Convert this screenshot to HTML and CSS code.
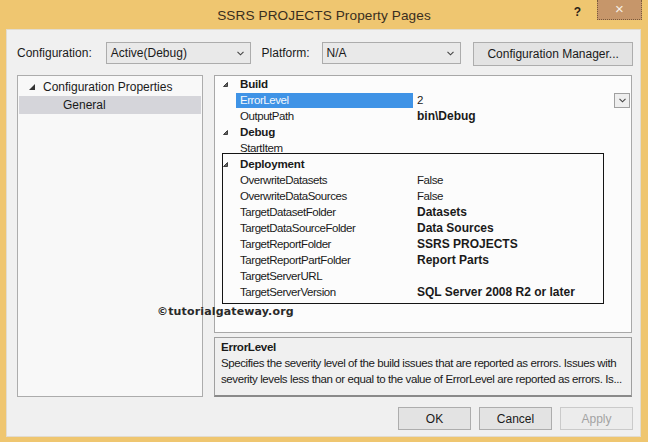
FILE: index.html
```html
<!DOCTYPE html>
<html>
<head>
<meta charset="utf-8">
<title>SSRS PROJECTS Property Pages</title>
<link rel="stylesheet" href="styles.css">
</head>
<body>
<div class="window">
  <div class="titlebar">
    <div class="tb-side"></div>
    <div class="title">SSRS PROJECTS Property Pages</div>
    <div class="tb-controls">
      <span class="help">?</span>
      <span class="close">×</span>
    </div>
  </div>
  <div class="client">
    <div class="config-row">
      <span class="lbl lbl-config">Configuration:</span>
      <div class="combo combo-config">
        <span>Active(Debug)</span>
        <svg class="chev" width="7" height="5" viewBox="0 0 7 5"><path d="M0.5 0.8 L3.5 3.8 L6.5 0.8" fill="none" stroke="#444" stroke-width="1.1"/></svg>
      </div>
      <span class="lbl lbl-platform">Platform:</span>
      <div class="combo combo-platform">
        <span>N/A</span>
        <svg class="chev" width="7" height="5" viewBox="0 0 7 5"><path d="M0.5 0.8 L3.5 3.8 L6.5 0.8" fill="none" stroke="#444" stroke-width="1.1"/></svg>
      </div>
      <button class="btn btn-cm">Configuration Manager...</button>
    </div>

    <div class="main">
      <div class="tree">
        <div class="tree-row tree-root">
          <svg class="tree-tri" width="6" height="6" viewBox="0 0 6 6"><polygon points="6,0 6,6 0,6" fill="#333"/></svg>
          <span>Configuration Properties</span>
        </div>
        <div class="tree-row tree-child selected">General</div>
      </div>

      <div class="right">
        <div class="grid">
          <div class="row cat">
            <div class="gutter"><svg width="5" height="5" viewBox="0 0 5 5"><polygon points="4.5,0.5 4.5,4.5 0.5,4.5" fill="#666" stroke="#222" stroke-width="0.8"/></svg></div>
            <div class="name">Build</div>
          </div>
          <div class="row">
            <div class="gutter"></div>
            <div class="name sel">ErrorLevel</div>
            <div class="val">2
              <span class="ddbtn"><svg width="7" height="5" viewBox="0 0 7 5"><path d="M0.5 0.8 L3.5 3.8 L6.5 0.8" fill="none" stroke="#444" stroke-width="1.1"/></svg></span>
            </div>
          </div>
          <div class="row">
            <div class="gutter"></div>
            <div class="name">OutputPath</div>
            <div class="val b">bin\Debug</div>
          </div>
          <div class="row cat">
            <div class="gutter"><svg width="5" height="5" viewBox="0 0 5 5"><polygon points="4.5,0.5 4.5,4.5 0.5,4.5" fill="#666" stroke="#222" stroke-width="0.8"/></svg></div>
            <div class="name">Debug</div>
          </div>
          <div class="row">
            <div class="gutter"></div>
            <div class="name">StartItem</div>
            <div class="val"></div>
          </div>
          <div class="row cat">
            <div class="gutter"><svg width="5" height="5" viewBox="0 0 5 5"><polygon points="4.5,0.5 4.5,4.5 0.5,4.5" fill="#666" stroke="#222" stroke-width="0.8"/></svg></div>
            <div class="name">Deployment</div>
          </div>
          <div class="row">
            <div class="gutter"></div>
            <div class="name">OverwriteDatasets</div>
            <div class="val">False</div>
          </div>
          <div class="row">
            <div class="gutter"></div>
            <div class="name">OverwriteDataSources</div>
            <div class="val">False</div>
          </div>
          <div class="row">
            <div class="gutter"></div>
            <div class="name">TargetDatasetFolder</div>
            <div class="val b">Datasets</div>
          </div>
          <div class="row">
            <div class="gutter"></div>
            <div class="name">TargetDataSourceFolder</div>
            <div class="val b">Data Sources</div>
          </div>
          <div class="row">
            <div class="gutter"></div>
            <div class="name">TargetReportFolder</div>
            <div class="val b">SSRS PROJECTS</div>
          </div>
          <div class="row">
            <div class="gutter"></div>
            <div class="name">TargetReportPartFolder</div>
            <div class="val b">Report Parts</div>
          </div>
          <div class="row">
            <div class="gutter"></div>
            <div class="name">TargetServerURL</div>
            <div class="val"></div>
          </div>
          <div class="row">
            <div class="gutter"></div>
            <div class="name">TargetServerVersion</div>
            <div class="val b">SQL Server 2008 R2 or later</div>
          </div>
          <div class="annot"></div>
        </div>
        <div class="desc">
          <div class="desc-title">ErrorLevel</div>
          <div class="desc-text">Specifies the severity level of the build issues that are reported as errors. Issues with<br>severity levels less than or equal to the value of ErrorLevel are reported as errors. Is...</div>
        </div>
      </div>
    </div>

    <div class="buttons">
      <button class="btn">OK</button>
      <button class="btn">Cancel</button>
      <button class="btn disabled">Apply</button>
    </div>
  </div>
  <div class="watermark">©tutorialgateway.org</div>
</div>
</body>
</html>
```

FILE: styles.css
```css
* { box-sizing: border-box; }
html, body { margin: 0; padding: 0; }
body {
  width: 648px;
  height: 442px;
  overflow: hidden;
  background: #efc670;
  font-family: "Liberation Sans", Arial, sans-serif;
  color: #000;
}
.window {
  position: relative;
  width: 648px;
  height: 442px;
  display: flex;
  flex-direction: column;
  background: #efc670;
}
.titlebar {
  height: 29px;
  display: grid;
  grid-template-columns: 1fr auto 1fr;
}
.title {
  align-self: center;
  font-size: 13.6px;
  color: #3a2e1e;
  padding-top: 1px;
  letter-spacing: 0.1px;
}
.tb-controls {
  justify-self: end;
  display: flex;
  align-items: flex-start;
  margin-right: 6px;
}
.help {
  font-weight: bold;
  font-size: 12px;
  color: #2a2218;
  margin-top: 5px;
  margin-right: 16px;
}
.close {
  width: 45px;
  height: 20px;
  background: #c6966a;
  border: 1px dotted #7a5a3a;
  border-top: none;
  color: #f7f0e6;
  font-size: 15px;
  line-height: 18px;
  text-align: center;
}
.client {
  margin: 0 7px 5px 6px;
  height: 408px;
  background: #f0f0f0;
  border: 1px solid #e2dccf;
  padding: 12px 7px 6px 10px;
  display: flex;
  flex-direction: column;
  font-size: 12px;
}
.config-row {
  height: 24px;
  display: flex;
  align-items: flex-start;
}
.lbl {
  line-height: 22px;
  color: #1a1a1a;
}
.lbl-config { width: 89px; }
.lbl-platform { width: 60px; margin-left: 11px; }
.combo {
  height: 22px;
  border: 1px solid #acacac;
  background: #e9e9e9;
  display: flex;
  align-items: center;
  padding: 0 6px 0 4px;
  color: #1a1a1a;
}
.combo span { flex: 1; }
.combo-config { width: 145px; }
.combo-platform { width: 140px; }
.btn {
  font-family: "Liberation Sans", Arial, sans-serif;
  font-size: 12px;
  color: #1a1a1a;
  background: #e3e3e3;
  border: 1px solid #adadad;
  border-radius: 0;
  padding: 0;
}
.btn-cm {
  width: 160px;
  height: 24px;
  margin-left: 12px;
}
.main {
  margin-top: 9px;
  height: 322px;
  display: flex;
  gap: 11px;
}
.tree {
  width: 186px;
  border: 1px solid #acacac;
  background: #f8f8f8;
  padding: 1px 1px;
}
.tree-row {
  height: 18px;
  display: flex;
  align-items: center;
  color: #1a1a1a;
}
.tree-root {
  height: 19px;
  padding-left: 10px;
  gap: 8px;
}
.tree-tri { margin-top: 1px; }
.tree-child { padding-left: 44px; }
.tree-child.selected { background: #d5d5da; }
.right {
  width: 418px;
  display: flex;
  flex-direction: column;
  gap: 4px;
}
.grid {
  position: relative;
  height: 258px;
  border: 1px solid #a8a8a8;
  background: #fcfcfc;
  font-size: 11.5px;
  letter-spacing: -0.45px;
}
.row {
  height: 16px;
  display: flex;
  align-items: center;
}
.gutter {
  width: 21px;
  height: 16px;
  display: flex;
  align-items: center;
  padding-left: 8px;
}
.name {
  width: 177px;
  padding-left: 4px;
  height: 16px;
  line-height: 16px;
  color: #1a1a1a;
  white-space: nowrap;
}
.cat .name {
  font-weight: bold;
  font-size: 11.6px;
  letter-spacing: -0.2px;
  width: auto;
}
.name.sel {
  background: #3f93e6;
  color: #f4f8fc;
  height: 15px;
  line-height: 15px;
  margin-top: 1px;
}
.val {
  flex: 1;
  padding-left: 4px;
  display: flex;
  align-items: center;
  height: 16px;
  color: #1a1a1a;
  white-space: nowrap;
}
.val.b {
  font-weight: bold;
  font-size: 12px;
  letter-spacing: 0;
}
.ddbtn {
  margin-left: auto;
  margin-right: 1px;
  width: 16px;
  height: 15px;
  border: 1px solid #a0a0a0;
  background: #eeeeee;
  display: flex;
  align-items: center;
  justify-content: center;
}
.annot {
  position: absolute;
  left: 7px;
  top: 77px;
  width: 382px;
  height: 151px;
  border: 1px solid #141414;
  pointer-events: none;
}
.desc {
  height: 60px;
  border: 1px solid #a0a0a0;
  border-bottom: 2px solid #8a8a8a;
  background: #f0f0f0;
  padding: 1px 6px;
  line-height: 16px;
  color: #1a1a1a;
  overflow: hidden;
}
.desc-title {
  font-weight: bold;
  font-size: 11.6px;
  letter-spacing: -0.3px;
}
.desc-text {
  font-size: 11.5px;
  letter-spacing: -0.4px;
}
.buttons {
  margin-top: 10px;
  height: 23px;
  display: flex;
  justify-content: flex-end;
  gap: 8px;
}
.buttons .btn {
  width: 73px;
  height: 23px;
}
.btn.disabled {
  color: #a3a3a3;
  border-color: #cacaca;
  background: #ececec;
}
.watermark {
  position: absolute;
  left: 157px;
  top: 305px;
  font-family: "DejaVu Sans", Verdana, sans-serif;
  font-weight: bold;
  font-size: 11px;
  letter-spacing: 0.15px;
  color: #2a2a2a;
}
```
